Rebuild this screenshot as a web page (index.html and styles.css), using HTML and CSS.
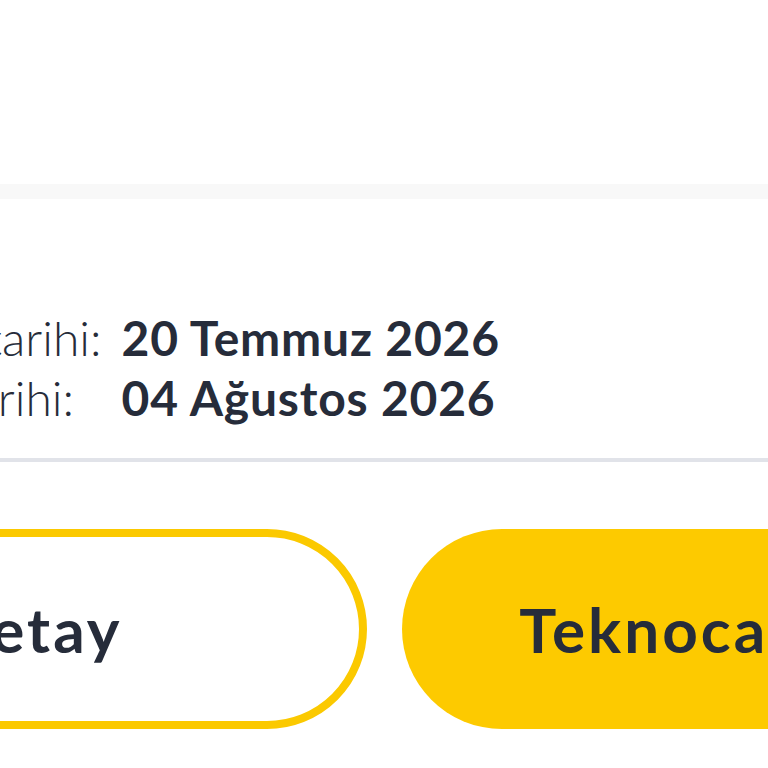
FILE: index.html
```html
<!DOCTYPE html>
<html lang="tr">

<head>
    <meta charset="UTF-8">
    <meta name="viewport" content="width=device-width, initial-scale=1.0">
    <title>Rezervasyon - Teknocar</title>
    <link rel="stylesheet" href="styles.css">
</head>

<body>

    <div class="top-space"></div>
    <div class="section-gap"></div>

    <!-- Rental dates -->
    <div class="date-card">
        <div class="date-grid">
            <span class="date-label">Kiralama tarihi:</span>
            <span class="date-value">20 Temmuz 2026</span>
            <span class="date-label">Bitirme tarihi:</span>
            <span class="date-value">04 Ağustos 2026</span>
        </div>
    </div>

    <!-- Actions -->
    <div class="actions">
        <button class="btn btn-outline">Detay</button>
        <button class="btn btn-filled">Teknocar'a Git</button>
    </div>

</body>

</html>
```

FILE: styles.css
```css
/* General Reset */
* {
    margin: 0;
    padding: 0;
    box-sizing: border-box;
}

html,
body {
    width: 768px;
    height: 768px;
    overflow: hidden;
}

body {
    font-family: Lato, "Liberation Sans", sans-serif;
    background-color: white;
    color: #262c3a;
}

.top-space {
    height: 184px;
}

.section-gap {
    height: 15px;
    background-color: #f8f8f8;
}

/* Date Card */
.date-card {
    padding: 109px 0 30px;
    border-bottom: 4px solid #e1e3e9;
}

.date-grid {
    display: grid;
    grid-template-columns: auto auto;
    justify-content: start;
    column-gap: 20px;
    margin-left: -204px;
    font-size: 48px;
    line-height: 60px;
    white-space: nowrap;
}

.date-label {
    font-weight: 300;
}

.date-value {
    font-weight: 700;
    letter-spacing: 0.8px;
}

/* Buttons */
.actions {
    display: flex;
    gap: 35px;
    padding-top: 67px;
    margin-left: -303px;
}

.btn {
    flex: 0 0 670px;
    height: 200px;
    border-radius: 100px;
    display: flex;
    align-items: center;
    justify-content: center;
    font-family: Lato, "Liberation Sans", sans-serif;
    font-size: 62px;
    font-weight: 700;
    letter-spacing: 3px;
    color: #262c3a;
    white-space: nowrap;
}

.btn-outline {
    background-color: white;
    border: 8px solid #fbc900;
}

.btn-filled {
    background-color: #fdca00;
    border: none;
}
```
